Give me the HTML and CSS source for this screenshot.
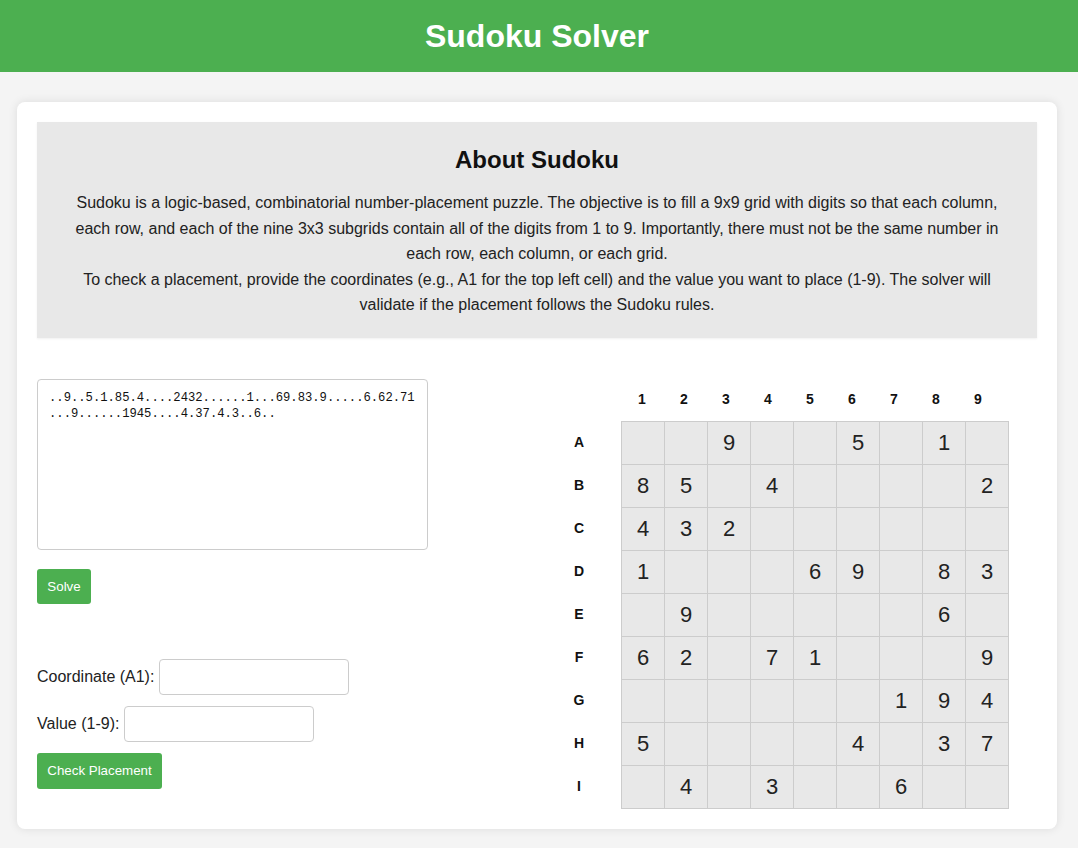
FILE: index.html
```html
<!DOCTYPE html>
<html lang="en">
<head>
<meta charset="utf-8">
<title>Sudoku Solver</title>
<link rel="stylesheet" href="styles.css">
</head>
<body>
<header class="site-header"><h1>Sudoku Solver</h1></header>
<main class="container">
  <section class="about">
    <h2>About Sudoku</h2>
    <p>Sudoku is a logic-based, combinatorial number-placement puzzle. The objective is to fill a 9x9 grid with digits so that each column, each row, and each of the nine 3x3 subgrids contain all of the digits from 1 to 9. Importantly, there must not be the same number in each row, each column, or each grid.<br>To check a placement, provide the coordinates (e.g., A1 for the top left cell) and the value you want to place (1-9). The solver will validate if the placement follows the Sudoku rules.</p>
  </section>
  <div class="workspace">
    <div class="controls">
      <textarea class="puzzle-input">..9..5.1.85.4....2432......1...69.83.9.....6.62.71...9......1945....4.37.4.3..6..</textarea>
      <button class="btn solve-btn">Solve</button>
      <div class="check-form">
        <div class="field"><label>Coordinate (A1):</label><input class="coord-input" type="text"></div>
        <div class="field"><label>Value (1-9):</label><input class="value-input" type="text"></div>
        <button class="btn">Check Placement</button>
      </div>
    </div>
    <div class="board">
      <div class="corner"></div>
      <div class="col-labels">
        <span>1</span><span>2</span><span>3</span><span>4</span><span>5</span><span>6</span><span>7</span><span>8</span><span>9</span>
      </div>
      <div class="row-labels">
        <span>A</span><span>B</span><span>C</span><span>D</span><span>E</span><span>F</span><span>G</span><span>H</span><span>I</span>
      </div>
      <div class="cells">
        <div class="cell"></div><div class="cell"></div><div class="cell">9</div><div class="cell"></div><div class="cell"></div><div class="cell">5</div><div class="cell"></div><div class="cell">1</div><div class="cell"></div>
        <div class="cell">8</div><div class="cell">5</div><div class="cell"></div><div class="cell">4</div><div class="cell"></div><div class="cell"></div><div class="cell"></div><div class="cell"></div><div class="cell">2</div>
        <div class="cell">4</div><div class="cell">3</div><div class="cell">2</div><div class="cell"></div><div class="cell"></div><div class="cell"></div><div class="cell"></div><div class="cell"></div><div class="cell"></div>
        <div class="cell">1</div><div class="cell"></div><div class="cell"></div><div class="cell"></div><div class="cell">6</div><div class="cell">9</div><div class="cell"></div><div class="cell">8</div><div class="cell">3</div>
        <div class="cell"></div><div class="cell">9</div><div class="cell"></div><div class="cell"></div><div class="cell"></div><div class="cell"></div><div class="cell"></div><div class="cell">6</div><div class="cell"></div>
        <div class="cell">6</div><div class="cell">2</div><div class="cell"></div><div class="cell">7</div><div class="cell">1</div><div class="cell"></div><div class="cell"></div><div class="cell"></div><div class="cell">9</div>
        <div class="cell"></div><div class="cell"></div><div class="cell"></div><div class="cell"></div><div class="cell"></div><div class="cell"></div><div class="cell">1</div><div class="cell">9</div><div class="cell">4</div>
        <div class="cell">5</div><div class="cell"></div><div class="cell"></div><div class="cell"></div><div class="cell"></div><div class="cell">4</div><div class="cell"></div><div class="cell">3</div><div class="cell">7</div>
        <div class="cell"></div><div class="cell">4</div><div class="cell"></div><div class="cell">3</div><div class="cell"></div><div class="cell"></div><div class="cell">6</div><div class="cell"></div><div class="cell"></div>
      </div>
    </div>
  </div>
</main>
</body>
</html>
```

FILE: styles.css
```css
* { box-sizing: border-box; }

body {
  margin: 0;
  background: #f4f4f4;
  font-family: "Liberation Sans", Arial, sans-serif;
  color: #222;
}

.site-header {
  background: #4caf50;
  padding: 17px 4px 17px 0;
  text-align: center;
}

.site-header h1 {
  margin: 0;
  color: #fff;
  font-size: 32px;
  line-height: 38px;
  font-weight: bold;
}

.container {
  margin: 30px 21px 18px 17px;
  background: #fff;
  border-radius: 8px;
  box-shadow: 0 0 10px rgba(0, 0, 0, 0.1);
  padding: 20px;
}

.about {
  background: #e8e8e8;
  padding: 20px;
  text-align: center;
  box-shadow: 0 1px 2px rgba(0, 0, 0, 0.06);
}

.about h2 {
  margin: 4px 0 16px;
  font-size: 24px;
  line-height: 28px;
  color: #111;
}

.about p {
  margin: 0;
  font-size: 16px;
  line-height: 25.5px;
  color: #222;
}

.workspace {
  display: grid;
  grid-template-columns: 500px 1fr;
  margin-top: 40px;
}

.controls {
  display: flex;
  flex-direction: column;
  align-items: flex-start;
  padding-top: 1px;
}

.puzzle-input {
  width: 391px;
  height: 171px;
  padding: 10px 11px;
  border: 1px solid #ccc;
  border-radius: 4px;
  font-family: "Liberation Mono", "Courier New", monospace;
  font-size: 12.2px;
  line-height: 16px;
  color: #111;
  resize: none;
}

.btn {
  background: #4caf50;
  color: #fff;
  border: none;
  border-radius: 3px;
  padding: 10px;
  font-family: "Liberation Sans", Arial, sans-serif;
  font-size: 13.33px;
  line-height: 15px;
  cursor: pointer;
}

.solve-btn {
  margin-top: 19px;
  width: 54px;
}

.check-form {
  margin-top: 55px;
  display: flex;
  flex-direction: column;
  align-items: flex-start;
  gap: 11px;
}

.field {
  display: flex;
  align-items: center;
  gap: 5px;
  font-size: 16px;
  color: #222;
}

.field input {
  width: 190px;
  height: 36px;
  border: 1px solid #ccc;
  border-radius: 4px;
  padding: 8px;
  font-size: 14px;
}

.check-form .btn {
  padding: 10px 10px;
  line-height: 16px;
  width: 125px;
}

.board {
  display: grid;
  grid-template-columns: 84px 388px;
  grid-template-rows: 43px auto;
  align-self: start;
}

.col-labels {
  display: flex;
}

.col-labels span {
  width: 42px;
  display: flex;
  align-items: center;
  justify-content: center;
  font-size: 14px;
  font-weight: bold;
  color: #111;
}

.row-labels {
  display: flex;
  flex-direction: column;
}

.row-labels span {
  height: 43px;
  display: flex;
  align-items: center;
  justify-content: center;
  font-size: 14px;
  font-weight: bold;
  color: #111;
}

.cells {
  display: grid;
  grid-template-columns: repeat(9, 42px);
  grid-auto-rows: 42px;
  gap: 1px;
  padding: 1px;
  background: #ccc;
}

.cell {
  background: #e8e8e8;
  display: flex;
  align-items: center;
  justify-content: center;
  font-size: 22px;
  color: #222;
}
```
